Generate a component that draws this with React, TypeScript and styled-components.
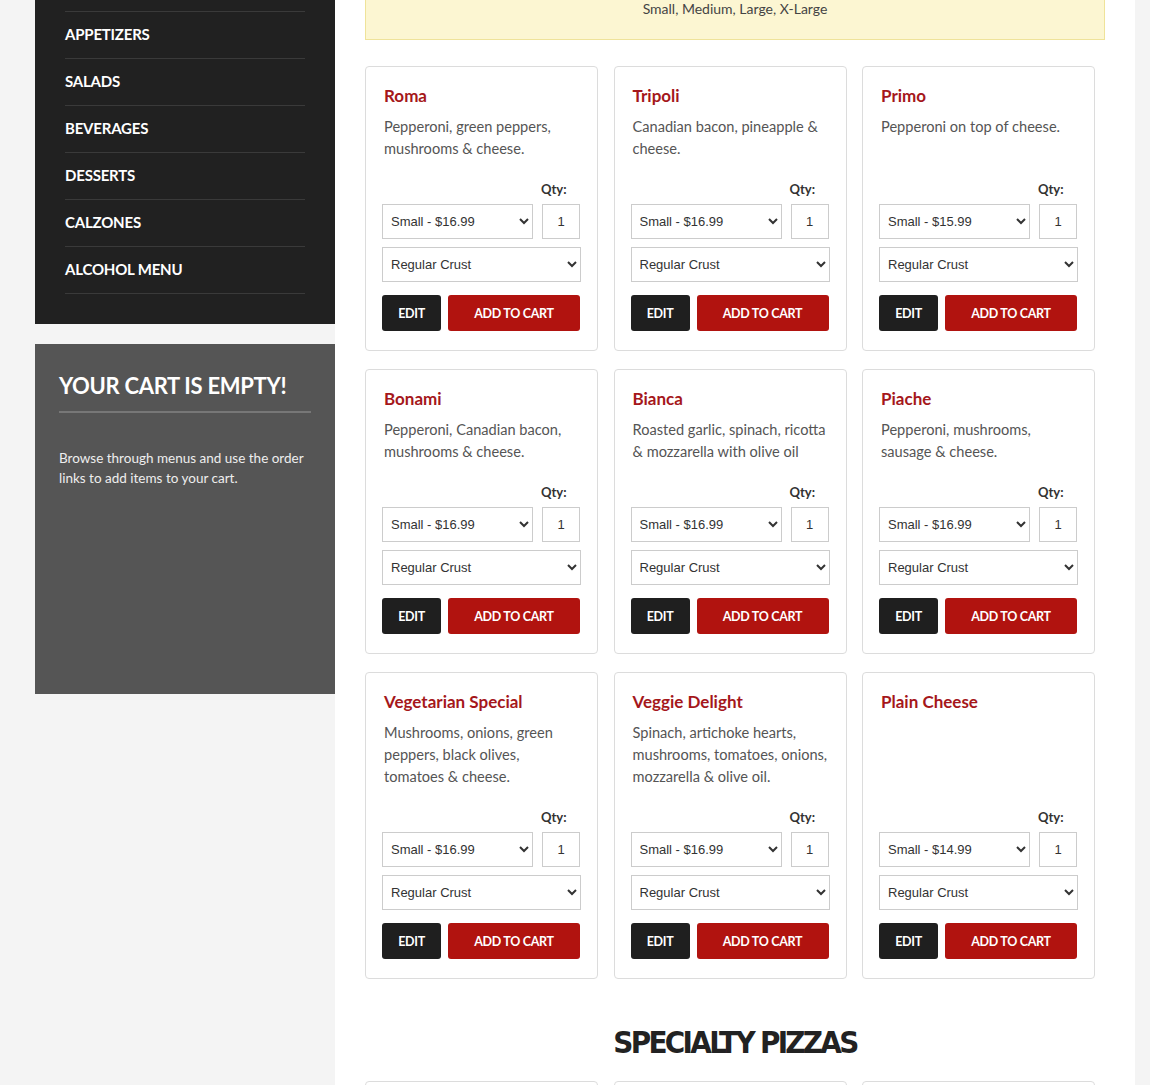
import React from 'react';
import styled, { createGlobalStyle } from 'styled-components';

interface Pizza {
  name: string;
  desc: string;
  price: string;
}

const GlobalStyle = createGlobalStyle`
  html, body {
    margin: 0;
    padding: 0;
    background: #f4f4f4;
    font-family: Lato, "Open Sans", Arial, sans-serif;
  }
`;

// page is shown scrolled a little, so the top of the menu sits above the fold
const Page = styled.div`
  display: flex;
  align-items: flex-start;
  padding-left: 35px;
  margin-top: -35px;
`;

const Sidebar = styled.aside`
  width: 300px;
  flex: none;
  display: flex;
  flex-direction: column;
  gap: 20px;
`;

const Nav = styled.nav`
  background: #212121;
  padding: 0 30px 30px;
`;

const NavItem = styled.a`
  display: flex;
  align-items: center;
  height: 44px;
  padding-bottom: 2px;
  border-bottom: 1px solid #3a3a3a;
  color: #fff;
  font-weight: 700;
  font-size: 15px;
  text-transform: uppercase;
  text-decoration: none;
  letter-spacing: -0.2px;
`;

const Cart = styled.div`
  background: #555555;
  height: 350px;
  box-sizing: border-box;
  padding: 27px 24px;
`;

const CartTitle = styled.h3`
  margin: 0;
  color: #fff;
  font-size: 22px;
  line-height: 30px;
  font-weight: 700;
  letter-spacing: -0.3px;
  padding-bottom: 10px;
  border-bottom: 2px solid #777;
`;

const CartText = styled.p`
  margin: 35px 0 0;
  color: #eee;
  font-size: 13.5px;
  line-height: 20px;
`;

const Main = styled.main`
  width: 800px;
  flex: none;
  background: #fff;
  box-sizing: border-box;
  padding: 0 30px 40px;
  min-height: 1200px;
`;

const Notice = styled.div`
  background: #fcf6d2;
  border: 1px solid #efe39a;
  padding: 13px 20px 20px;
  text-align: center;
  color: #444;
  font-size: 14px;
  line-height: 20px;
`;

const Grid = styled.div<{ $flush?: boolean }>`
  display: grid;
  grid-template-columns: repeat(3, 233px);
  column-gap: 15.5px;
  row-gap: 18px;
  margin-top: ${p => (p.$flush ? '0' : '26px')};
`;

const Card = styled.div`
  border: 1px solid #dcdcdc;
  border-radius: 4px;
  padding: 17px 16px 19px;
  display: flex;
  flex-direction: column;
`;

const Title = styled.h4`
  margin: 0 0 8px 2px;
  color: #a5171b;
  font-size: 17px;
  line-height: 24px;
  font-weight: 700;
`;

const Desc = styled.p`
  margin: 0 0 0 2px;
  color: #555;
  font-size: 14.6px;
  line-height: 22px;
  min-height: 44px;
`;

const Form = styled.div`
  margin-top: auto;
  padding-top: 20px;
  display: flex;
  flex-direction: column;
`;

const SizeRow = styled.div`
  display: flex;
  gap: 9px;
  align-items: flex-end;
`;

const QtyCol = styled.div`
  display: flex;
  flex-direction: column;
  width: 38px;
`;

const QtyLabel = styled.label`
  font-size: 13px;
  line-height: 18px;
  font-weight: 700;
  color: #333;
  margin: 0 0 6px -1px;
  white-space: nowrap;
`;

const Select = styled.select<{ $full?: boolean }>`
  height: 35px;
  box-sizing: border-box;
  border: 1px solid #ccc;
  border-radius: 0;
  background: #fff;
  color: #333;
  font-family: "Liberation Sans", Arial, sans-serif;
  font-size: 13px;
  padding: 0 4px;
  width: ${p => (p.$full ? '100%' : '151px')};
  flex: none;
`;

const QtyInput = styled.input`
  height: 35px;
  width: 38px;
  box-sizing: border-box;
  border: 1px solid #ccc;
  text-align: center;
  font-family: "Liberation Sans", Arial, sans-serif;
  font-size: 13px;
  color: #333;
  padding: 0;
`;

const CrustWrap = styled.div`
  margin-top: 8px;
`;

const Buttons = styled.div`
  display: flex;
  gap: 7px;
  margin-top: 13px;
`;

const Button = styled.button<{ $primary?: boolean }>`
  height: 36px;
  border: none;
  border-radius: 3px;
  color: #fff;
  font-family: Lato, Arial, sans-serif;
  font-weight: 700;
  font-size: 12.5px;
  letter-spacing: -0.3px;
  text-transform: uppercase;
  background: ${p => (p.$primary ? '#b1130f' : '#1f1f1f')};
  width: ${p => (p.$primary ? '132px' : '59px')};
  cursor: pointer;
`;

const SectionHeading = styled.h2`
  margin: 43px 0 19px;
  text-align: center;
  font-family: "Liberation Sans Narrow", "DejaVu Sans Condensed", Arial, sans-serif;
  font-stretch: condensed;
  font-size: 31px;
  line-height: 40px;
  font-weight: 700;
  color: #222;
  letter-spacing: -2.7px;
`;

const navItems = ['Pizzas', 'Appetizers', 'Salads', 'Beverages', 'Desserts', 'Calzones', 'Alcohol Menu'];

const pizzas: Pizza[] = [
  { name: 'Roma', desc: 'Pepperoni, green peppers, mushrooms & cheese.', price: '16.99' },
  { name: 'Tripoli', desc: 'Canadian bacon, pineapple & cheese.', price: '16.99' },
  { name: 'Primo', desc: 'Pepperoni on top of cheese.', price: '15.99' },
  { name: 'Bonami', desc: 'Pepperoni, Canadian bacon, mushrooms & cheese.', price: '16.99' },
  { name: 'Bianca', desc: 'Roasted garlic, spinach, ricotta & mozzarella with olive oil', price: '16.99' },
  { name: 'Piache', desc: 'Pepperoni, mushrooms, sausage & cheese.', price: '16.99' },
  { name: 'Vegetarian Special', desc: 'Mushrooms, onions, green peppers, black olives, tomatoes & cheese.', price: '16.99' },
  { name: 'Veggie Delight', desc: 'Spinach, artichoke hearts, mushrooms, tomatoes, onions, mozzarella & olive oil.', price: '16.99' },
  { name: 'Plain Cheese', desc: '', price: '14.99' },
];

const specialty: Pizza[] = [
  { name: 'Meat Lovers', desc: 'Pepperoni, sausage, Canadian bacon, bacon & cheese.', price: '18.99' },
  { name: 'Supreme', desc: 'Pepperoni, sausage, mushrooms, onions & green peppers.', price: '18.99' },
  { name: 'Hawaiian', desc: 'Ham, pineapple & cheese.', price: '17.99' },
];

const PizzaCard: React.FC<{ pizza: Pizza }> = ({ pizza }) => (
  <Card>
    <Title>{pizza.name}</Title>
    {pizza.desc && <Desc>{pizza.desc}</Desc>}
    <Form>
      <SizeRow>
        <Select defaultValue="small">
          <option value="small">Small - ${pizza.price}</option>
          <option value="medium">Medium</option>
          <option value="large">Large</option>
          <option value="xlarge">X-Large</option>
        </Select>
        <QtyCol>
          <QtyLabel>Qty:</QtyLabel>
          <QtyInput defaultValue="1" />
        </QtyCol>
      </SizeRow>
      <CrustWrap>
        <Select $full defaultValue="regular">
          <option value="regular">Regular Crust</option>
          <option value="thin">Thin Crust</option>
        </Select>
      </CrustWrap>
      <Buttons>
        <Button>Edit</Button>
        <Button $primary>Add to Cart</Button>
      </Buttons>
    </Form>
  </Card>
);

export default function App() {
  return (
    <>
      <GlobalStyle />
      <Page>
        <Sidebar>
          <Nav>
            {navItems.map(item => (
              <NavItem key={item} href="#">{item}</NavItem>
            ))}
          </Nav>
          <Cart>
            <CartTitle>YOUR CART IS EMPTY!</CartTitle>
            <CartText>Browse through menus and use the order links to add items to your cart.</CartText>
          </Cart>
        </Sidebar>
        <Main>
          <Notice>
            <div>Available sizes:</div>
            <div>Small, Medium, Large, X-Large</div>
          </Notice>
          <Grid>
            {pizzas.map(p => (
              <PizzaCard key={p.name} pizza={p} />
            ))}
          </Grid>
          <SectionHeading>SPECIALTY PIZZAS</SectionHeading>
          <Grid $flush>
            {specialty.map(p => (
              <PizzaCard key={p.name} pizza={p} />
            ))}
          </Grid>
        </Main>
      </Page>
    </>
  );
}
